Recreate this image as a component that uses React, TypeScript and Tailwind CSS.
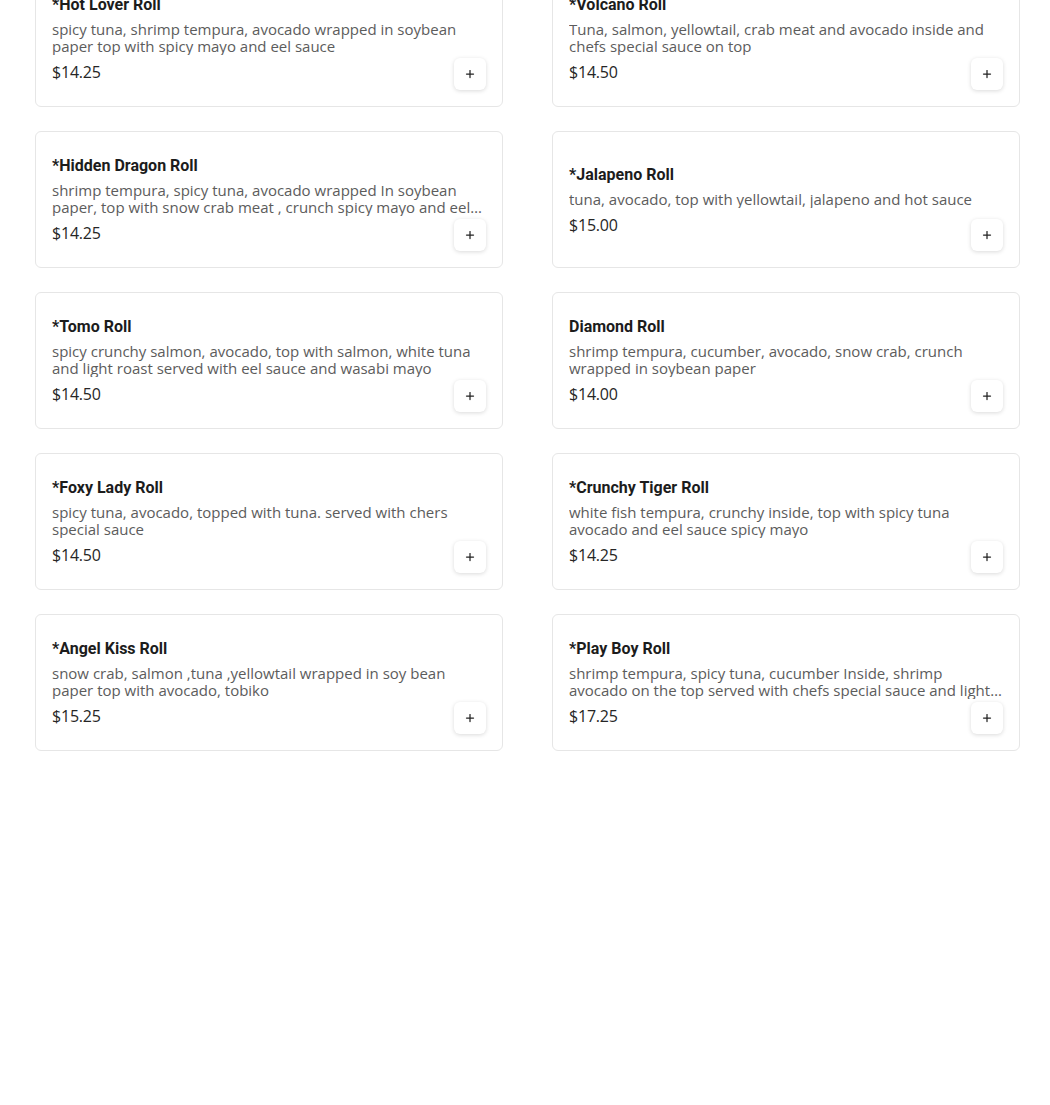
import { Plus } from "lucide-react";

type Roll = {
  name: string;
  description: string;
  price: string;
};

const rolls: Roll[] = [
  {
    name: "*Hot Lover Roll",
    description:
      "spicy tuna, shrimp tempura, avocado wrapped in soybean paper top with spicy mayo and eel sauce",
    price: "$14.25",
  },
  {
    name: "*Volcano Roll",
    description:
      "Tuna, salmon, yellowtail, crab meat and avocado inside and chefs special sauce on top",
    price: "$14.50",
  },
  {
    name: "*Hidden Dragon Roll",
    description:
      "shrimp tempura, spicy tuna, avocado wrapped In soybean paper, top with snow crab meat , crunch spicy mayo and eel sauce",
    price: "$14.25",
  },
  {
    name: "*Jalapeno Roll",
    description: "tuna, avocado, top with yellowtail, jalapeno and hot sauce",
    price: "$15.00",
  },
  {
    name: "*Tomo Roll",
    description:
      "spicy crunchy salmon, avocado, top with salmon, white tuna and light roast served with eel sauce and wasabi mayo",
    price: "$14.50",
  },
  {
    name: "Diamond Roll",
    description:
      "shrimp tempura, cucumber, avocado, snow crab, crunch wrapped in soybean paper",
    price: "$14.00",
  },
  {
    name: "*Foxy Lady Roll",
    description:
      "spicy tuna, avocado, topped with tuna. served with chers special sauce",
    price: "$14.50",
  },
  {
    name: "*Crunchy Tiger Roll",
    description:
      "white fish tempura, crunchy inside, top with spicy tuna avocado and eel sauce spicy mayo",
    price: "$14.25",
  },
  {
    name: "*Angel Kiss Roll",
    description:
      "snow crab, salmon ,tuna ,yellowtail wrapped in soy bean paper top with avocado, tobiko",
    price: "$15.25",
  },
  {
    name: "*Play Boy Roll",
    description:
      "shrimp tempura, spicy tuna, cucumber Inside, shrimp avocado on the top served with chefs special sauce and light sauce",
    price: "$17.25",
  },
];

function RollCard(props: { roll: Roll }) {
  const { roll } = props;
  return (
    <article className="relative flex flex-col justify-center h-[137px] px-4 pt-[1px] rounded-md border border-[#e6e6e6] bg-white">
      <h3 className="font-['Roboto',sans-serif] font-bold text-[16px] leading-5 text-[#1c1c1c]">
        {roll.name}
      </h3>
      <p className="mt-[6px] line-clamp-2 font-['Open_Sans',sans-serif] text-[15px] leading-[17px] text-[#5c5c5c]">
        {roll.description}
      </p>
      <p className="mt-[6px] font-['Open_Sans',sans-serif] text-[16px] tracking-[-0.2px] leading-[22px] text-[#262626]">
        {roll.price}
      </p>
      <button className="absolute right-4 bottom-4 flex items-center justify-center w-8 h-8 rounded-md bg-white shadow-[0_1px_4px_rgba(0,0,0,0.15)] text-[#222]">
        <Plus size={12} strokeWidth={2.5} />
      </button>
    </article>
  );
}

export default function App() {
  return (
    <div className="min-h-[1105px] bg-white">
      <div className="grid grid-cols-2 gap-x-[49px] gap-y-[24px] w-[985px] ml-[35px] -mt-[30px]">
        {rolls.map((roll) => (
          <RollCard key={roll.name} roll={roll} />
        ))}
      </div>
    </div>
  );
}
